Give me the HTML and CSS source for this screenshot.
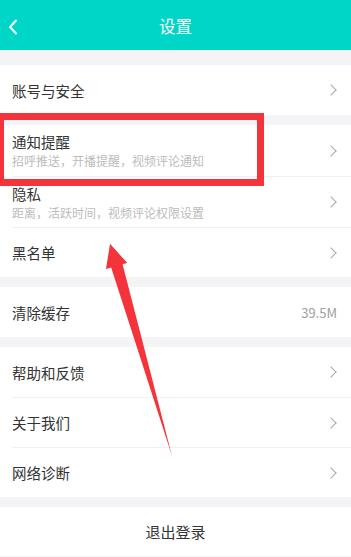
FILE: index.html
```html
<!DOCTYPE html>
<html>
<head>
<meta charset="utf-8">
<link rel="stylesheet" href="styles.css">
</head>
<body>
<div class="page">
  <header class="bar">
    <svg class="back" width="10" height="16" viewBox="0 0 10 16"><path d="M8 1.5 L2 8 L8 14.5" fill="none" stroke="#fff" stroke-width="2" stroke-linecap="round" stroke-linejoin="round"/></svg>
    <div class="title">设置</div>
  </header>

  <div class="group">
    <div class="row"><span class="label">账号与安全</span><span class="chev"></span></div>
  </div>

  <div class="group">
    <div class="row tall"><div class="texts"><span class="label">通知提醒</span><span class="sub">招呼推送，开播提醒，视频评论通知</span></div><span class="chev"></span></div>
    <div class="row tall"><div class="texts"><span class="label">隐私</span><span class="sub">距离，活跃时间，视频评论权限设置</span></div><span class="chev"></span></div>
    <div class="row"><span class="label">黑名单</span><span class="chev"></span></div>
  </div>

  <div class="group">
    <div class="row"><span class="label">清除缓存</span><span class="value">39.5M</span></div>
  </div>

  <div class="group">
    <div class="row"><span class="label">帮助和反馈</span><span class="chev"></span></div>
    <div class="row"><span class="label">关于我们</span><span class="chev"></span></div>
    <div class="row"><span class="label">网络诊断</span><span class="chev"></span></div>
  </div>

  <div class="group">
    <div class="logout">退出登录</div>
  </div>

  <div class="highlight"></div>
  <svg class="arrow" width="351" height="557" viewBox="0 0 351 557">
    <polygon points="110,244 127,263 122,262 172,456 111,267" fill="#f5333a"/>
    <polygon points="110,244 127,263 106,269" fill="#f5333a"/>
  </svg>
</div>
</body>
</html>
```

FILE: styles.css
```css
* { box-sizing: border-box; }
html, body { margin: 0; padding: 0; }
body {
  width: 351px;
  height: 557px;
  overflow: hidden;
  background: #f4f4f6;
  font-family: "Noto Sans CJK SC", "Noto Sans", sans-serif;
  color: #333;
}
.page { position: relative; width: 351px; height: 557px; }
.bar {
  height: 50px;
  background: #00d6c8;
  display: flex;
  align-items: center;
  justify-content: center;
  position: relative;
}
.back { position: absolute; left: 8px; top: 19px; }
.title { color: #fff; font-size: 16.5px; line-height: 1; margin-top: 2px; }
.group {
  background: #fff;
  margin-top: 10px;
  padding-left: 12px;
}
.bar + .group { margin-top: 15px; }
.row {
  height: 50px;
  display: flex;
  align-items: center;
  justify-content: space-between;
  padding-right: 14px;
  border-top: 1px solid #f0f0f2;
}
.row:first-child { border-top: none; }
.row.tall { height: 51px; }
.texts { display: flex; flex-direction: column; }
.label { font-size: 14.5px; line-height: 19px; }
.sub { font-size: 12px; line-height: 17px; color: #bcbcbc; margin-top: 1px; }
.chev {
  width: 8px; height: 8px;
  border-right: 1px solid #a8a8a8;
  border-top: 1px solid #a8a8a8;
  transform: rotate(45deg);
  margin-right: 2px;
}
.value { font-size: 13px; color: #a0a0a0; }
.logout {
  height: 49px;
  display: flex;
  align-items: center;
  justify-content: center;
  font-size: 15px;
  margin-left: -12px;
  color: #333;
}
.highlight {
  position: absolute;
  left: -3px; top: 113px;
  width: 267px; height: 73px;
  border: 7px solid #f5333a;
}
.arrow { position: absolute; left: 0; top: 0; }
```
